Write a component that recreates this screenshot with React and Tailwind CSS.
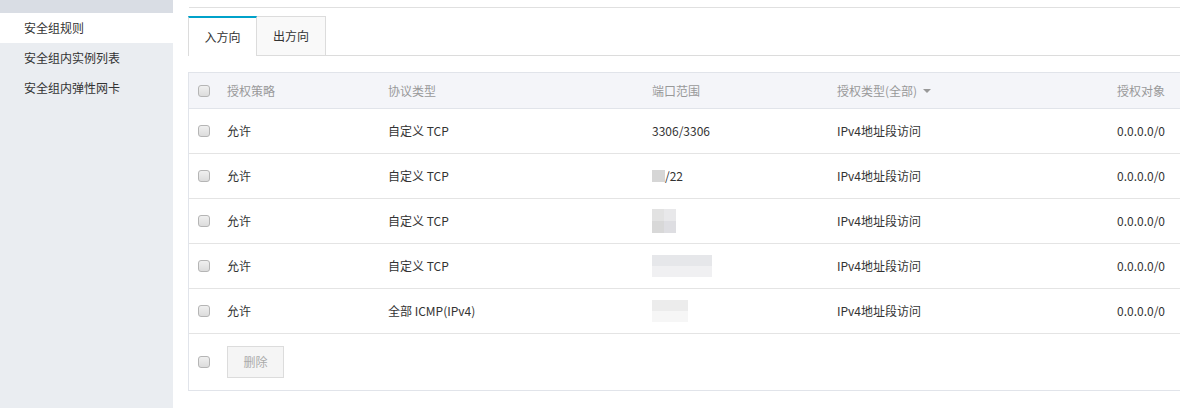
const rows = [
  { policy: '允许', proto: '自定义 TCP', port: '3306/3306', type: 'IPv4地址段访问', target: '0.0.0.0/0' },
  { policy: '允许', proto: '自定义 TCP', port: 'mask22', type: 'IPv4地址段访问', target: '0.0.0.0/0' },
  { policy: '允许', proto: '自定义 TCP', port: 'mask', type: 'IPv4地址段访问', target: '0.0.0.0/0' },
  { policy: '允许', proto: '自定义 TCP', port: 'mask2', type: 'IPv4地址段访问', target: '0.0.0.0/0' },
  { policy: '允许', proto: '全部 ICMP(IPv4)', port: 'mask3', type: 'IPv4地址段访问', target: '0.0.0.0/0' },
]

function Check() {
  return (
    <span className="block w-[12px] h-[12px] rounded-[3px] border border-[#b5b5b5] bg-gradient-to-b from-[#f0f0f0] to-[#dcdcdc]" />
  )
}

function Port({ v }) {
  if (v === 'mask22') {
    return (
      <span className="flex items-center">
        <span className="w-[13px] h-[12px] bg-[#d6d6d6]" />
        <span>/22</span>
      </span>
    )
  }
  if (v === 'mask') {
    return (
      <span className="flex flex-col">
        <span className="flex"><span className="w-[12px] h-[12px] bg-[#e2e2e2]" /><span className="w-[12px] h-[12px] bg-[#e8e8ea]" /></span>
        <span className="flex"><span className="w-[12px] h-[12px] bg-[#d8d8d8]" /><span className="w-[12px] h-[12px] bg-[#dedee2]" /></span>
      </span>
    )
  }
  if (v === 'mask2') {
    return (
      <span className="flex flex-col">
        <span className="flex"><span className="w-[60px] h-[11px] bg-[#e6e7ea]" /></span>
        <span className="flex"><span className="w-[60px] h-[11px] bg-[#f0f0f2]" /></span>
      </span>
    )
  }
  if (v === 'mask3') {
    return (
      <span className="flex flex-col">
        <span className="w-[36px] h-[11px] bg-[#ececec]" />
        <span className="w-[36px] h-[11px] bg-[#f6f6f6]" />
      </span>
    )
  }
  return <span>{v}</span>
}

export default function App() {
  return (
    <div className="flex w-[1180px] h-[408px] overflow-hidden bg-white text-[12px]" style={{ fontFamily: '"Microsoft YaHei", "Noto Sans CJK SC", sans-serif' }}>
      <div className="w-[173px] shrink-0 bg-[#eaedf1] flex flex-col">
        <div className="h-[13px] bg-[#d9dde4]" />
        <div className="h-[30px] bg-white flex items-center pl-[24px] text-[#333]">安全组规则</div>
        <div className="h-[30px] flex items-center pl-[24px] text-[#333]">安全组内实例列表</div>
        <div className="h-[30px] flex items-center pl-[24px] text-[#333]">安全组内弹性网卡</div>
      </div>
      <div className="flex-1 pl-[15px] flex flex-col min-w-0">
        <div className="h-[8px] border-b border-[#e0e0e0] ml-[1px]" />
        <div className="flex mt-[8px] h-[40px] border-b border-[#dcdcdc]">
          <div className="w-[69px] -mb-px bg-white border-t-2 border-t-[#00a2ca] border-x border-x-[#dcdcdc] flex items-center justify-center text-[#333]">入方向</div>
          <div className="w-[69px] bg-[#f9f9f9] border-t border-r border-[#dcdcdc] flex items-center justify-center text-[#333]">出方向</div>
        </div>
        <div className="mt-[16px] border border-[#e1e4ea] w-[1010px] shrink-0">
          <div className="h-[36px] bg-[#f4f5f9] border-b border-[#e1e4ea] flex items-center text-[#999]">
            <div className="w-[38px] pl-[9px]"><Check /></div>
            <div className="w-[161px]">授权策略</div>
            <div className="w-[264px]">协议类型</div>
            <div className="w-[185px]">端口范围</div>
            <div className="w-[260px] flex items-center">授权类型(全部)<span className="ml-[6px] w-0 h-0 border-x-[4px] border-x-transparent border-t-[4px] border-t-[#999]" /></div>
            <div className="w-[68px] text-right whitespace-nowrap">授权对象</div>
          </div>
          {rows.map((r, i) => (
            <div key={i} className="h-[45px] border-b border-[#e4e4e4] flex items-center text-[#333]">
              <div className="w-[38px] pl-[9px]"><Check /></div>
              <div className="w-[161px]">{r.policy}</div>
              <div className="w-[264px]">{r.proto}</div>
              <div className="w-[185px]"><Port v={r.port} /></div>
              <div className="w-[260px]">{r.type}</div>
              <div className="w-[68px] text-right whitespace-nowrap">{r.target}</div>
            </div>
          ))}
          <div className="h-[56px] flex items-center">
            <div className="w-[38px] pl-[9px]"><Check /></div>
            <button className="w-[57px] h-[32px] border border-[#dcdcdc] bg-[#f5f5f5] text-[#aaa] flex items-center justify-center">删除</button>
          </div>
        </div>
      </div>
    </div>
  )
}
